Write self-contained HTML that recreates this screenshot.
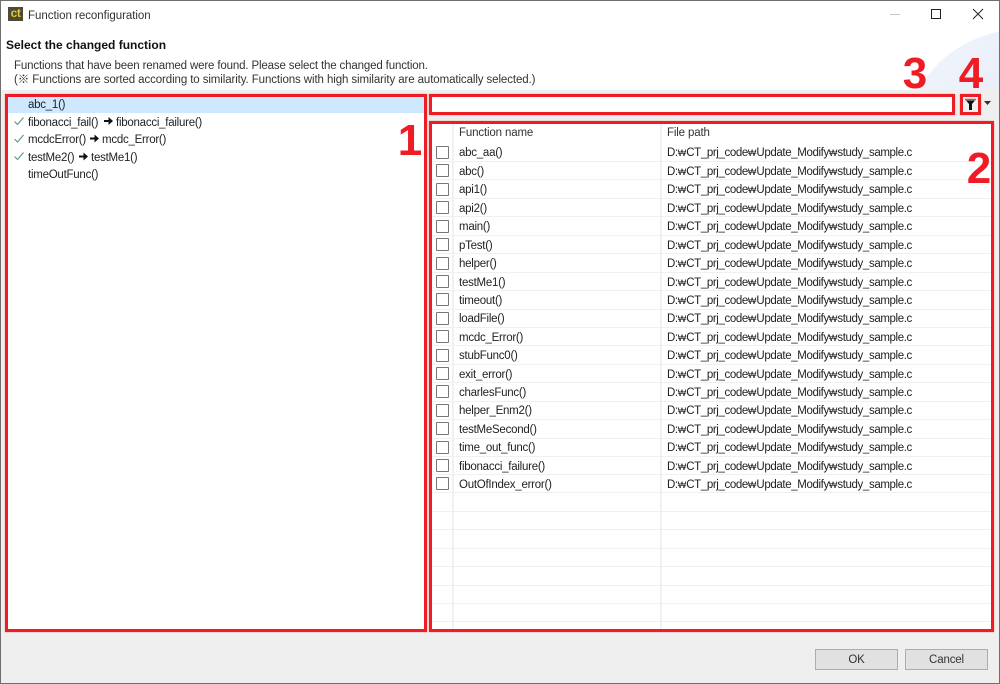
<!DOCTYPE html>
<html lang="en"><head><meta charset="utf-8"><title>Function reconfiguration</title>
<style>
html,body{margin:0;padding:0;width:1000px;height:684px;overflow:hidden;background:#efefef}
body{position:relative;font-family:"Liberation Sans","Noto Sans CJK KR",sans-serif;font-size:11.5px;letter-spacing:-.15px;color:#222}
.a{position:absolute;white-space:nowrap}
.t{position:absolute;white-space:nowrap;line-height:16px;height:16px;margin-top:1px}
.n{letter-spacing:-.25px}
.p{left:667px;letter-spacing:-.38px}
.p i{font-style:normal;font-size:9px;letter-spacing:0}
.box{position:absolute;box-sizing:border-box;border:3px solid #ee1c25;box-shadow:0 0 1px rgba(238,28,37,.6)}
.d{position:absolute;font-weight:bold;color:#ee1c25;font-size:44px;line-height:44px;text-align:center;width:30px;letter-spacing:0}
.cb{position:absolute;left:436px;width:11px;height:11px;border:1px solid #777;background:#fff;border-radius:1px}
.hl{position:absolute;left:432px;width:559px;height:1px;background:#eef0f2}
.btn{position:absolute;top:649px;height:21px;box-sizing:border-box;border:1px solid #adadad;background:#e1e1e1;text-align:center;line-height:20px;color:#333}
</style></head><body>
<div class="a" style="left:0;top:0;width:1000px;height:90px;background:#fff"></div>
<div class="a" style="left:820px;top:25px;width:180px;height:65px;overflow:hidden"><div class="a" style="left:90px;top:3px;width:240px;height:200px;border-radius:50%;background:linear-gradient(135deg,#f3f6fc,#d6dff2)"></div></div>
<div class="a" style="left:0;top:0;width:1000px;height:1px;background:#6f6f6f"></div>
<div class="a" style="left:0;top:0;width:1px;height:684px;background:#6f6f6f"></div>
<div class="a" style="right:0;top:0;width:1px;height:684px;background:#6f6f6f"></div>
<div class="a" style="left:0;top:683px;width:1000px;height:1px;background:#6f6f6f"></div>

<div class="a" style="left:8px;top:7px;width:15px;height:14px;background:#4d4a38;color:#e2c92d;font:bold 12px/13px 'Liberation Sans',sans-serif;text-align:center;letter-spacing:-.5px">ct</div>
<div class="t" style="left:28px;top:7px;color:#333;letter-spacing:-.03px">Function reconfiguration</div>
<svg class="a" style="left:880px;top:4px" width="115" height="20" viewBox="0 0 115 20" fill="none" stroke="#222" stroke-width="1">
<path d="M10 10.500h10" stroke="#c9c9c9"/><path d="M51.500 5.500h9v9h-9z"/><path d="M93 5l10 10M103 5l-10 10"/></svg>

<div class="t" style="left:6px;top:36px;font-weight:bold;font-size:12px;letter-spacing:0;color:#111">Select the changed function</div>
<div class="t" style="left:14px;top:57px;color:#333">Functions that have been renamed were found. Please select the changed function.</div>
<div class="t" style="left:14px;top:71px;color:#333;letter-spacing:-.1px">(※ Functions are sorted according to similarity. Functions with high similarity are automatically selected.)</div>

<div class="a" style="left:5px;top:94px;width:422px;height:538px;background:#fff"></div>
<div class="a" style="left:8px;top:97px;width:416px;height:16px;background:#cde8ff"></div>
<div class="t n" style="left:28px;top:96px">abc_1()</div>
<div class="t n" style="left:28px;top:114px">fibonacci_fail()</div><div class="t n" style="left:116px;top:114px">fibonacci_failure()</div>
<div class="t n" style="left:28px;top:131px">mcdcError()</div><div class="t n" style="left:102px;top:131px">mcdc_Error()</div>
<div class="t n" style="left:28px;top:149px">testMe2()</div><div class="t n" style="left:91px;top:149px">testMe1()</div>
<div class="t n" style="left:28px;top:166px">timeOutFunc()</div>
<svg class="a" style="left:0;top:110px" width="120" height="60" viewBox="0 0 120 60" fill="#111">
<path d="M104 10h4.500v-3l4.500 4-4.500 4v-3h-4.500zM90 27.500h4.500v-3l4.500 4-4.500 4v-3h-4.500zM79 45.500h4.500v-3l4.500 4-4.500 4v-3h-4.500z"/>
<path d="M14.500 11.500l3 3 6-7M14.500 29l3 3 6-7M14.500 46.500l3 3 6-7" fill="none" stroke="#5f9e86" stroke-width="1.200"/></svg>

<div class="a" style="left:429px;top:94px;width:526px;height:21px;background:#fff"></div>
<div class="a" style="left:429px;top:121px;width:565px;height:511px;background:#fff"></div>
<div class="a" style="left:452px;top:124px;width:2px;height:505px;background:#eef2f8"></div>
<div class="a" style="left:660px;top:124px;width:2px;height:505px;background:#eef2f8"></div>
<div class="t" style="left:459px;top:124px;color:#333">Function name</div>
<div class="t" style="left:667px;top:124px;color:#333">File path</div>

<div class="hl" style="top:161px"></div><div class="hl" style="top:179px"></div><div class="hl" style="top:198px"></div><div class="hl" style="top:216px"></div><div class="hl" style="top:235px"></div><div class="hl" style="top:253px"></div><div class="hl" style="top:272px"></div><div class="hl" style="top:290px"></div><div class="hl" style="top:309px"></div><div class="hl" style="top:327px"></div><div class="hl" style="top:345px"></div><div class="hl" style="top:364px"></div><div class="hl" style="top:382px"></div><div class="hl" style="top:401px"></div><div class="hl" style="top:419px"></div><div class="hl" style="top:438px"></div><div class="hl" style="top:456px"></div><div class="hl" style="top:474px"></div><div class="hl" style="top:492px"></div><div class="hl" style="top:511px"></div><div class="hl" style="top:529px"></div><div class="hl" style="top:548px"></div><div class="hl" style="top:566px"></div><div class="hl" style="top:585px"></div><div class="hl" style="top:603px"></div><div class="hl" style="top:621px"></div>

<div class="cb" style="top:146px"></div><div class="t n" style="left:459px;top:144px">abc_aa()</div><div class="t p" style="top:144px">D:<i>₩</i>CT_prj_code<i>₩</i>Update_Modify<i>₩</i>study_sample.c</div>
<div class="cb" style="top:164px"></div><div class="t n" style="left:459px;top:163px">abc()</div><div class="t p" style="top:163px">D:<i>₩</i>CT_prj_code<i>₩</i>Update_Modify<i>₩</i>study_sample.c</div>
<div class="cb" style="top:183px"></div><div class="t n" style="left:459px;top:181px">api1()</div><div class="t p" style="top:181px">D:<i>₩</i>CT_prj_code<i>₩</i>Update_Modify<i>₩</i>study_sample.c</div>
<div class="cb" style="top:201px"></div><div class="t n" style="left:459px;top:200px">api2()</div><div class="t p" style="top:200px">D:<i>₩</i>CT_prj_code<i>₩</i>Update_Modify<i>₩</i>study_sample.c</div>
<div class="cb" style="top:220px"></div><div class="t n" style="left:459px;top:218px">main()</div><div class="t p" style="top:218px">D:<i>₩</i>CT_prj_code<i>₩</i>Update_Modify<i>₩</i>study_sample.c</div>
<div class="cb" style="top:238px"></div><div class="t n" style="left:459px;top:237px">pTest()</div><div class="t p" style="top:237px">D:<i>₩</i>CT_prj_code<i>₩</i>Update_Modify<i>₩</i>study_sample.c</div>
<div class="cb" style="top:257px"></div><div class="t n" style="left:459px;top:255px">helper()</div><div class="t p" style="top:255px">D:<i>₩</i>CT_prj_code<i>₩</i>Update_Modify<i>₩</i>study_sample.c</div>
<div class="cb" style="top:275px"></div><div class="t n" style="left:459px;top:274px">testMe1()</div><div class="t p" style="top:274px">D:<i>₩</i>CT_prj_code<i>₩</i>Update_Modify<i>₩</i>study_sample.c</div>
<div class="cb" style="top:293px"></div><div class="t n" style="left:459px;top:292px">timeout()</div><div class="t p" style="top:292px">D:<i>₩</i>CT_prj_code<i>₩</i>Update_Modify<i>₩</i>study_sample.c</div>
<div class="cb" style="top:312px"></div><div class="t n" style="left:459px;top:310px">loadFile()</div><div class="t p" style="top:310px">D:<i>₩</i>CT_prj_code<i>₩</i>Update_Modify<i>₩</i>study_sample.c</div>
<div class="cb" style="top:330px"></div><div class="t n" style="left:459px;top:329px">mcdc_Error()</div><div class="t p" style="top:329px">D:<i>₩</i>CT_prj_code<i>₩</i>Update_Modify<i>₩</i>study_sample.c</div>
<div class="cb" style="top:349px"></div><div class="t n" style="left:459px;top:347px">stubFunc0()</div><div class="t p" style="top:347px">D:<i>₩</i>CT_prj_code<i>₩</i>Update_Modify<i>₩</i>study_sample.c</div>
<div class="cb" style="top:367px"></div><div class="t n" style="left:459px;top:366px">exit_error()</div><div class="t p" style="top:366px">D:<i>₩</i>CT_prj_code<i>₩</i>Update_Modify<i>₩</i>study_sample.c</div>
<div class="cb" style="top:385px"></div><div class="t n" style="left:459px;top:384px">charlesFunc()</div><div class="t p" style="top:384px">D:<i>₩</i>CT_prj_code<i>₩</i>Update_Modify<i>₩</i>study_sample.c</div>
<div class="cb" style="top:404px"></div><div class="t n" style="left:459px;top:402px">helper_Enm2()</div><div class="t p" style="top:402px">D:<i>₩</i>CT_prj_code<i>₩</i>Update_Modify<i>₩</i>study_sample.c</div>
<div class="cb" style="top:422px"></div><div class="t n" style="left:459px;top:421px">testMeSecond()</div><div class="t p" style="top:421px">D:<i>₩</i>CT_prj_code<i>₩</i>Update_Modify<i>₩</i>study_sample.c</div>
<div class="cb" style="top:441px"></div><div class="t n" style="left:459px;top:439px">time_out_func()</div><div class="t p" style="top:439px">D:<i>₩</i>CT_prj_code<i>₩</i>Update_Modify<i>₩</i>study_sample.c</div>
<div class="cb" style="top:459px"></div><div class="t n" style="left:459px;top:458px">fibonacci_failure()</div><div class="t p" style="top:458px">D:<i>₩</i>CT_prj_code<i>₩</i>Update_Modify<i>₩</i>study_sample.c</div>
<div class="cb" style="top:477px"></div><div class="t n" style="left:459px;top:476px">OutOfIndex_error()</div><div class="t p" style="top:476px">D:<i>₩</i>CT_prj_code<i>₩</i>Update_Modify<i>₩</i>study_sample.c</div>

<div class="box" style="left:5px;top:94px;width:422px;height:538px"></div>
<div class="box" style="left:429px;top:94px;width:526px;height:21px"></div>
<div class="box" style="left:429px;top:121px;width:565px;height:511px"></div>
<div class="box" style="left:960px;top:94px;width:21px;height:21px"></div>
<svg class="a" style="left:963px;top:97px" width="15" height="15" viewBox="0 0 15 15"><path d="M3 3.500h9l-3 3.500v6h-3v-6z" fill="#111"/><path d="M2 2.500h11" stroke="#777" stroke-width="1.500"/></svg>
<svg class="a" style="left:984px;top:101px" width="8" height="5" viewBox="0 0 8 5"><path d="M0 0h7l-3.500 4z" fill="#333"/></svg>

<div class="d" style="left:395px;top:119px">1</div>
<div class="d" style="left:964px;top:147px">2</div>
<div class="d" style="left:900px;top:52px">3</div>
<div class="d" style="left:956px;top:52px">4</div>

<div class="btn" style="left:815px;width:83px">OK</div>
<div class="btn" style="left:905px;width:83px">Cancel</div>
</body></html>
